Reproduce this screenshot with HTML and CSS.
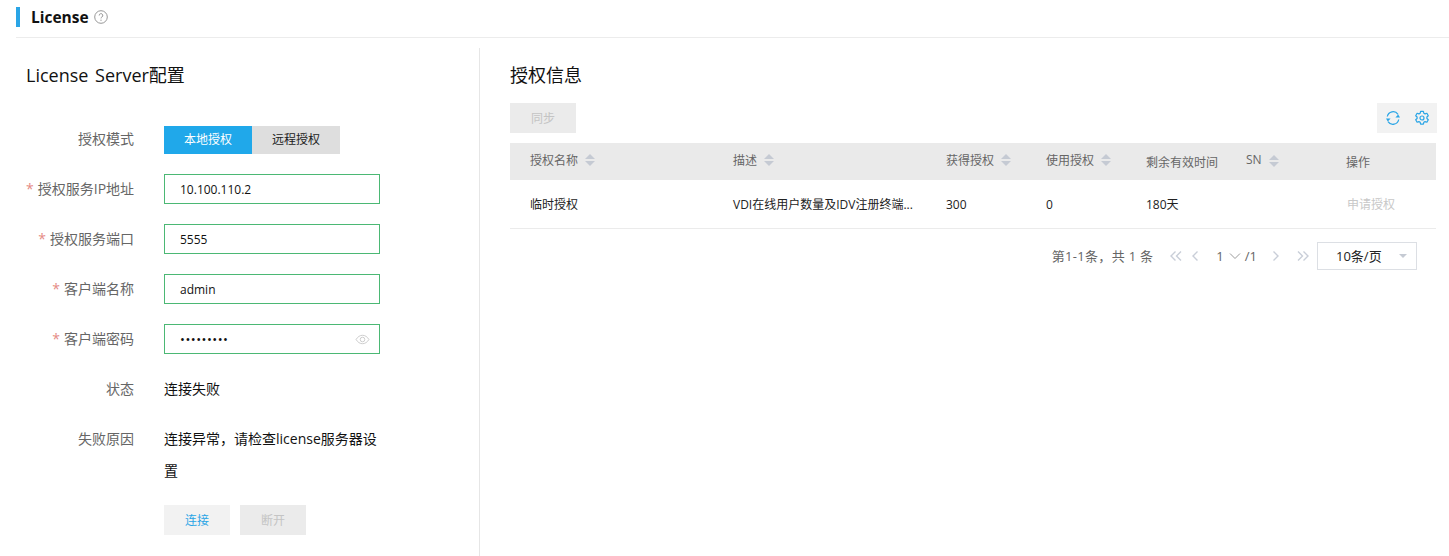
FILE: index.html
```html
<!DOCTYPE html>
<html lang="zh-CN">
<head>
<meta charset="utf-8">
<title>License</title>
<link rel="stylesheet" href="styles.css">
</head>
<body>
<header class="page-header">
  <span class="title-bar"></span>
  <h1 class="page-title">License</h1>
  <svg class="help-icon" viewBox="0 0 14 14" width="14" height="14"><circle cx="7" cy="7" r="6.3" fill="none" stroke="#8c8c8c" stroke-width="0.9"/><path d="M5.2 5.5a1.8 1.8 0 1 1 2.7 1.5c-.6.4-.9.7-.9 1.4" fill="none" stroke="#8c8c8c" stroke-width="0.9"/><circle cx="7" cy="10.2" r="0.6" fill="#8c8c8c"/></svg>
</header>
<main class="content">
  <section class="left-panel">
    <h2 class="section-title">License Server配置</h2>
    <div class="form">
      <div class="form-row row-mode">
        <span class="label">授权模式</span>
        <div class="segments"><span class="segment active">本地授权</span><span class="segment">远程授权</span></div>
      </div>
      <div class="form-row row-input">
        <span class="label"><i class="req">*</i>授权服务IP地址</span>
        <div class="input">10.100.110.2</div>
      </div>
      <div class="form-row row-input">
        <span class="label"><i class="req">*</i>授权服务端口</span>
        <div class="input">5555</div>
      </div>
      <div class="form-row row-input">
        <span class="label"><i class="req">*</i>客户端名称</span>
        <div class="input">admin</div>
      </div>
      <div class="form-row row-input">
        <span class="label"><i class="req">*</i>客户端密码</span>
        <div class="input input-password"><span class="dots">•••••••••</span>
          <svg class="eye-icon" viewBox="0 0 16 12" width="15" height="11"><path d="M1 6c1.800-3 4.200-4.600 7-4.600S13.200 3 15 6c-1.800 3-4.200 4.600-7 4.600S2.800 9 1 6z" fill="none" stroke="#c8c8c8" stroke-width="1"/><circle cx="8" cy="6" r="2.500" fill="none" stroke="#c8c8c8" stroke-width="1"/></svg>
        </div>
      </div>
      <div class="form-row row-status">
        <span class="label">状态</span>
        <span class="value">连接失败</span>
      </div>
      <div class="form-row row-reason">
        <span class="label">失败原因</span>
        <span class="value">连接异常，请检查license服务器设置</span>
      </div>
      <div class="form-actions">
        <button class="btn btn-connect">连接</button>
        <button class="btn btn-disabled">断开</button>
      </div>
    </div>
  </section>
  <section class="right-panel">
    <h2 class="section-title">授权信息</h2>
    <div class="toolbar">
      <button class="btn btn-disabled">同步</button>
      <div class="tools">
        <svg viewBox="0 0 16 16" width="16" height="16"><path d="M2.300 6.500A5.900 5.900 0 0 1 13 4.300M13.700 9.500A5.900 5.900 0 0 1 3 11.700" fill="none" stroke="#2aa5e6" stroke-width="1.200"/><path d="M15 7.400h-4.600l2.800-3zM1 8.600h4.600l-2.800 3z" fill="#2aa5e6"/></svg>
        <svg viewBox="0 0 16 16" width="16" height="16"><path d="M6.600 1.300h2.800l.4 1.900 1.300.7 1.800-.6 1.400 2.400-1.400 1.300v1.500l1.400 1.300-1.400 2.400-1.800-.6-1.300.7-.4 1.900H6.600l-.4-1.900-1.300-.7-1.800.6-1.400-2.400 1.400-1.300V7.000L1.700 5.700l1.400-2.400 1.800.6 1.300-.7z" fill="none" stroke="#2aa5e6" stroke-width="1.200" stroke-linejoin="round"/><circle cx="8" cy="8" r="2" fill="none" stroke="#2aa5e6" stroke-width="1.200"/></svg>
      </div>
    </div>
    <table class="data-table">
      <colgroup><col class="c1"><col class="c2"><col class="c3"><col class="c3"><col class="c3"><col class="c3"><col class="c4"></colgroup>
      <thead>
        <tr>
          <th><span class="th-text">授权名称</span><span class="sort"></span></th>
          <th><span class="th-text">描述</span><span class="sort"></span></th>
          <th><span class="th-text">获得授权</span><span class="sort"></span></th>
          <th><span class="th-text">使用授权</span><span class="sort"></span></th>
          <th class="th-plain">剩余有效时间</th>
          <th><span class="th-text">SN</span><span class="sort"></span></th>
          <th class="th-plain">操作</th>
        </tr>
      </thead>
      <tbody>
        <tr>
          <td>临时授权</td>
          <td>VDI在线用户数量及IDV注册终端...</td>
          <td>300</td>
          <td>0</td>
          <td>180天</td>
          <td></td>
          <td class="link-disabled">申请授权</td>
        </tr>
      </tbody>
    </table>
    <nav class="pagination">
      <span class="total">第1-1条，共 1 条</span>
      <svg class="pg-icon" viewBox="0 0 14 12" width="14" height="12"><path d="M6.500 1.500 2 6l4.500 4.500M12 1.500 7.500 6l4.500 4.500" fill="none" stroke="#c9ced8" stroke-width="1.400"/></svg>
      <svg class="pg-icon pg-prev" viewBox="0 0 8 12" width="8" height="12"><path d="M6.500 1.500 2 6l4.500 4.500" fill="none" stroke="#c9ced8" stroke-width="1.400"/></svg>
      <span class="page-num">1</span>
      <svg class="pg-caret" viewBox="0 0 12 8" width="12" height="8"><path d="M1 1.500 6 6.500l5-5" fill="none" stroke="#9a9a9a" stroke-width="1"/></svg>
      <span class="page-total">/1</span>
      <svg class="pg-icon pg-next" viewBox="0 0 8 12" width="8" height="12"><path d="M1.500 1.500 6 6l-4.500 4.500" fill="none" stroke="#c9ced8" stroke-width="1.400"/></svg>
      <svg class="pg-icon pg-last" viewBox="0 0 14 12" width="14" height="12"><path d="M2 1.500 6.500 6 2 10.500M7.500 1.500 12 6l-4.500 4.500" fill="none" stroke="#c9ced8" stroke-width="1.400"/></svg>
      <div class="page-size"><span>10条/页</span><i class="caret-down"></i></div>
    </nav>
  </section>
</main>
</body>
</html>
```
FILE: styles.css
```css
* { box-sizing: border-box; }
html, body { height: 100%; }
body {
  margin: 0;
  background: #fff;
  color: #111;
  font-family: "Open Sans", "Noto Sans CJK SC", sans-serif;
  font-size: 12px;
  overflow: hidden;
}
.page-header {
  height: 38px;
  margin-left: 16px;
  padding-top: 7px;
  border-bottom: 1px solid #ececec;
  display: flex;
  align-items: flex-start;
}
.title-bar { width: 4px; height: 20px; background: #2aa5e6; }
.page-title {
  margin: 0 0 0 11px;
  font-size: 15.500px;
  line-height: 20px;
  font-weight: 700;
  color: #111;
}
.help-icon { margin: 3px 0 0 5px; }
.content { display: flex; padding-top: 10px; height: 518px; }
.left-panel {
  width: 480px;
  border-right: 1px solid #e6e6e6;
  padding-left: 26px;
}
.section-title {
  margin: 0;
  font-size: 18px;
  line-height: 24px;
  font-weight: 400;
  word-spacing: 2px;
  color: #111;
  padding-top: 15px;
  height: 39px;
}
.form { padding-top: 39px; }
.form-row { display: flex; align-items: center; }
.label {
  width: 108px;
  text-align: right;
  margin-right: 30px;
  color: #666;
  font-size: 14px;
  line-height: 20px;
  flex: none;
  white-space: nowrap;
}
.req {
  font-style: normal;
  color: #e58a85;
  margin-right: 4px;
}
.row-mode { height: 28px; margin-bottom: 20px; }
.row-mode .label { padding-bottom: 2px; }
.row-input { height: 30px; margin-bottom: 20px; }
.segments { display: flex; }
.segment {
  width: 88px;
  height: 28px;
  line-height: 28px;
  text-align: center;
  background: #dedede;
  color: #222;
}
.segment.active { background: #20a8ea; color: #fff; }
.input {
  width: 216px;
  height: 30px;
  border: 1px solid #4bb874;
  padding: 1px 0 0 15px;
  line-height: 28px;
  color: #111;
}
.input-password {
  display: flex;
  align-items: center;
  justify-content: space-between;
  padding: 0 9px 0 15px;
}
.dots { font-size: 13px; letter-spacing: 0.500px; }
.row-status { height: 30px; margin-bottom: 20px; }
.value { color: #111; font-size: 14px; line-height: 20px; }
.row-reason { align-items: flex-start; height: 82px; margin: -1px 0 0; }
.row-reason .label { line-height: 32px; }
.row-reason .value { width: 216px; line-height: 32px; }
.form-actions { display: flex; gap: 10px; padding-left: 138px; }
.btn {
  width: 66px;
  height: 30px;
  border: 0;
  padding: 0;
  font: inherit;
  text-align: center;
}
.btn-connect { background: #f2f2f2; color: #2aa5e6; }
.btn-disabled { background: #ebebeb; color: #c4c4c4; }
.right-panel { width: 927px; margin-left: 30px; }
.toolbar {
  display: flex;
  justify-content: space-between;
  margin-top: 16px;
  margin-bottom: 10px;
  height: 30px;
}
.tools {
  width: 60px;
  background: #f2f2f2;
  display: flex;
  align-items: center;
  justify-content: space-between;
  padding: 0 7px 0 8px;
}
.data-table {
  width: 926px;
  table-layout: fixed;
  border-collapse: collapse;
}
.c1 { width: 203px; }
.c2 { width: 213px; }
.c3 { width: 100px; }
.c4 { width: 110px; }
.data-table th {
  height: 37px;
  background: #eaeaea;
  font-weight: 400;
  color: #666;
  text-align: left;
  padding: 0 0 5px 20px;
  font-size: 12px;
}
.data-table th.th-plain { padding-bottom: 0; }
.th-text { vertical-align: middle; }
.sort {
  display: inline-block;
  vertical-align: middle;
  position: relative;
  width: 10px;
  height: 12px;
  margin-left: 7px;
  top: 1px;
}
.sort::before, .sort::after {
  content: "";
  position: absolute;
  left: 0;
  border-left: 5px solid transparent;
  border-right: 5px solid transparent;
}
.sort::before { top: 0; border-bottom: 5px solid #c5cad3; }
.sort::after { bottom: 0; border-top: 5px solid #c5cad3; }
.data-table td {
  height: 48px;
  padding: 1px 0 0 20px;
  border-bottom: 1px solid #ebebeb;
  color: #222;
  white-space: nowrap;
}
.data-table td.link-disabled { color: #c8c8c8; padding-left: 21px; }
.pagination {
  display: flex;
  align-items: center;
  justify-content: flex-end;
  height: 28px;
  margin-top: 13px;
  padding-right: 20px;
  color: #666;
  font-size: 13px;
}
.total { margin-right: 16px; letter-spacing: 0.300px; }
.pg-prev { margin-left: 8px; }
.page-num { margin-left: 17px; }
.pg-caret { margin-left: 5px; }
.page-total { margin-left: 4px; }
.pg-next { margin-left: 15px; }
.pg-last { margin-left: 16px; }
.page-size {
  width: 100px;
  height: 28px;
  margin-left: 7px;
  border: 1px solid #dcdfe4;
  display: flex;
  align-items: center;
  justify-content: space-between;
  padding: 0 9px 0 18px;
  color: #222;
  font-size: 13px;
}
.caret-down {
  border-left: 4px solid transparent;
  border-right: 4px solid transparent;
  border-top: 4px solid #c5cad3;
}
```
